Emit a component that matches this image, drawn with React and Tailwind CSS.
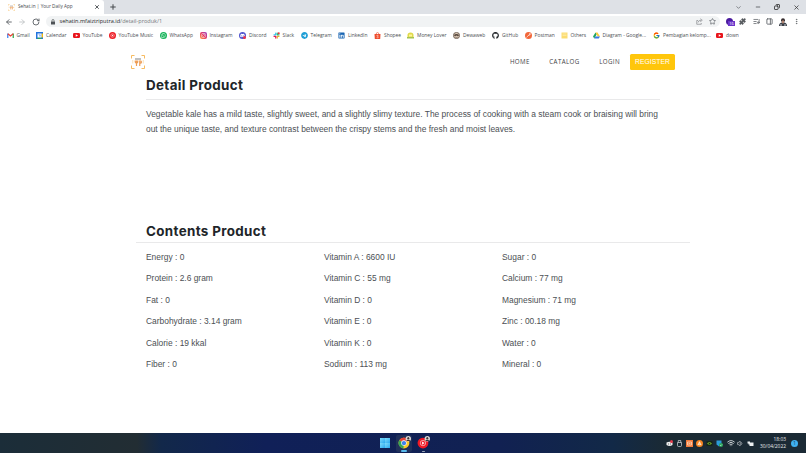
import React from 'react';
import {
  ArrowLeft,
  ArrowRight,
  RotateCw,
  X,
  Plus,
  ChevronDown,
  Minus,
  Copy,
  Star,
  Puzzle,
  ListMusic,
  PanelRight,
  EllipsisVertical,
  Wifi,
  Volume1,
} from 'lucide-react';
import { FaGithub, FaLinkedin, FaDiscord, FaInstagram, FaTelegram, FaWhatsapp } from 'react-icons/fa';
import { FcGoogle } from 'react-icons/fc';

const SehatLogo = ({ className }) => (
  <svg viewBox="0 0 28 28" className={className} fill="none" stroke="#f6b34e" strokeWidth="1.8">
    <path d="M1 7V1h6M21 1h6v6M27 21v6h-6M7 27H1v-6" />
    <path d="M8 8h12" stroke="#8c8c8c" strokeWidth="2.2" />
    <path d="M8.500 11v3q0 2 2.500 2t2.500-2v-3M11 11v11M17.500 11v11M17.500 11.500q3.500 0 3.500 2.500t-3.500 3" stroke="#ee9d55" strokeWidth="2.4" />
    <path d="M3.500 10v7M24.500 10v7" stroke="#f8cf91" strokeWidth="1.3" />
  </svg>
);

const GmailIcon = () => (
  <svg viewBox="0 0 14 14" className="size-[7px]" fill="none" strokeWidth="2.600">
    <path d="M1.500 12V3" stroke="#4285f4" />
    <path d="M12.500 12V3" stroke="#34a853" />
    <path d="M1.500 3.500L7 8l5.500-4.500" stroke="#ea4335" />
  </svg>
);

const CalendarIcon = () => (
  <svg viewBox="0 0 14 14" className="size-[7px]">
    <path d="M0 0h14v14H0z" fill="#2374df" />
    <path d="M11 3h3v8h-3z" fill="#fbbc04" />
    <path d="M3 11h8v3H3z" fill="#34a853" />
    <path d="M3 3h8v8H3z" fill="#fff" />
    <path d="M5 5h2v4M9 5v4" stroke="#4285f4" fill="none" />
  </svg>
);

const YoutubeIcon = () => (
  <svg viewBox="0 0 14 14" className="size-[7px]">
    <rect y="2" width="14" height="10" rx="2.500" fill="#e8141b" />
    <path d="M5.500 4.500v5L10 7z" fill="#fff" />
  </svg>
);

const YoutubeMusicIcon = () => (
  <svg viewBox="0 0 14 14" className="size-[7px]">
    <circle cx="7" cy="7" r="7" fill="#ee1c24" />
    <circle cx="7" cy="7" r="3.600" fill="none" stroke="#fff" strokeWidth=".8" />
    <path d="M5.800 5v4L9 7z" fill="#fff" />
  </svg>
);

const WhatsappIcon = () => (
  <span className="flex size-[7px] items-center justify-center rounded-full bg-[#19b45b]">
    <FaWhatsapp className="size-[5px] text-white" />
  </span>
);

const InstagramIcon = () => (
  <span className="flex size-[7px] items-center justify-center rounded-[2px] bg-linear-to-tr from-[#f9a33a] via-[#e5325e] to-[#9637c8]">
    <FaInstagram className="size-[5px] text-white" />
  </span>
);

const DiscordIcon = () => (
  <span className="relative flex size-[7px] items-center justify-center rounded-full bg-[#5156cf]">
    <FaDiscord className="size-[5px] text-white" />
    <span className="absolute right-0 bottom-0 size-[3px] rounded-full bg-[#e7304b]" />
  </span>
);

const SlackIcon = () => (
  <svg viewBox="0 0 14 14" className="size-[7px]" strokeWidth="2.500" strokeLinecap="round">
    <path d="M5.500 2v3.500M2 5.500h2" stroke="#36c5f0" />
    <path d="M8.500 2v3.500M12 5.500h-2" stroke="#2eb67d" />
    <path d="M8.500 12V8.500M12 8.500h-2" stroke="#ecb22e" />
    <path d="M5.500 12V8.500M2 8.500h2" stroke="#e01e5a" />
    <circle cx="11.500" cy="2.500" r="2" fill="#e5323a" />
  </svg>
);

const ShopeeIcon = () => (
  <svg viewBox="0 0 14 14" className="size-[7px]">
    <path d="M1 4h12l-.6 10H1.600z" fill="#ee4d2d" />
    <path d="M4.500 4q0-3 2.500-3t2.500 3" fill="none" stroke="#ee4d2d" strokeWidth="1.200" />
    <path d="M9 6.800q-4-1.300-3.500.8c.3 1.200 3.500.9 3.300 2.700-.3 1.700-2.300 1.300-3.600.5" fill="none" stroke="#fff" />
  </svg>
);

const MoneyLoverIcon = () => (
  <svg viewBox="0 0 14 14" className="size-[7px]">
    <path d="M1 11V6q0-5 6-5t6 5v5z" fill="#dfd94a" />
    <path d="M0 10h14v3H0z" fill="#a5c34f" />
    <path d="M4 5h6v4H4z" fill="#fff59a" />
  </svg>
);

const DewawebIcon = () => (
  <svg viewBox="0 0 14 14" className="size-[7px]">
    <circle cx="7" cy="7" r="6.200" fill="#d9c7b4" stroke="#58483e" strokeWidth="1.500" />
    <path d="M2 6q5-4 10 0l-1 2H9L7 7 5 8H3z" fill="#54453b" />
    <path d="M4.500 10q2.500 2 5 0" stroke="#54453b" fill="none" />
  </svg>
);

const PostmanIcon = () => (
  <svg viewBox="0 0 14 14" className="size-[7px]">
    <circle cx="7" cy="7" r="7" fill="#f2673a" />
    <path d="M3 11l5.500-6M7 8l2-2" stroke="#fff" strokeWidth="1.300" />
    <circle cx="9.800" cy="4.200" r="1.600" fill="#fff" />
  </svg>
);

const FolderIcon = () => (
  <svg viewBox="0 0 14 14" className="size-[7px]">
    <path d="M1 1h12v12H1z" fill="#fbdc72" />
    <path d="M3 4h8M3 7h8" stroke="#fff0ba" strokeWidth="1.200" />
  </svg>
);

const DriveIcon = () => (
  <svg viewBox="0 0 14 14" className="size-[7px]">
    <path d="M5 1L0 9l2.500 4L7.300 5z" fill="#1fa463" />
    <path d="M5 1h4l5 8H9.600z" fill="#fcc934" />
    <path d="M4.800 9H14l-2.500 4h-9z" fill="#3b78e7" />
  </svg>
);

const bookmarks = [
  { name: 'Gmail', icon: <GmailIcon />, size: 'w-[29.5px]' },
  { name: 'Calendar', icon: <CalendarIcon />, size: 'w-[36.5px]' },
  { name: 'YouTube', icon: <YoutubeIcon />, size: 'w-[36px]' },
  { name: 'YouTube Music', icon: <YoutubeMusicIcon />, size: 'w-[51px]' },
  { name: 'WhatsApp', icon: <WhatsappIcon />, size: 'w-[40px]' },
  { name: 'Instagram', icon: <InstagramIcon />, size: 'w-[39.5px]' },
  { name: 'Discord', icon: <DiscordIcon />, size: 'w-[33.5px]' },
  { name: 'Slack', icon: <SlackIcon />, size: 'w-[28px]' },
  { name: 'Telegram', icon: <FaTelegram className="size-[7px] text-[#219fd6]" />, size: 'w-[37.5px]' },
  { name: 'LinkedIn', icon: <FaLinkedin className="size-[7px] text-[#1764b2]" />, size: 'w-[36px]' },
  { name: 'Shopee', icon: <ShopeeIcon />, size: 'w-[33px]' },
  { name: 'Money Lover', icon: <MoneyLoverIcon />, size: 'w-[46px]' },
  { name: 'Dewaweb', icon: <DewawebIcon />, size: 'w-[39px]' },
  { name: 'GitHub', icon: <FaGithub className="size-[7px] text-[#1b1f23]" />, size: 'w-[32.5px]' },
  { name: 'Postman', icon: <PostmanIcon />, size: 'w-[36px]' },
  { name: 'Others', icon: <FolderIcon />, size: 'w-[32px]' },
  { name: 'Diagram - Google...', icon: <DriveIcon />, size: 'w-[60.5px]' },
  { name: 'Pembagian kelomp...', icon: <FcGoogle className="size-[7px]" />, size: 'w-[63px]' },
  { name: 'down', icon: <YoutubeIcon />, size: 'w-[30px]' },
];

const contents = [
  ['Energy : 0', 'Vitamin A : 6600 IU', 'Sugar : 0'],
  ['Protein : 2.6 gram', 'Vitamin C : 55 mg', 'Calcium : 77 mg'],
  ['Fat : 0', 'Vitamin D : 0', 'Magnesium : 71 mg'],
  ['Carbohydrate : 3.14 gram', 'Vitamin E : 0', 'Zinc : 00.18 mg'],
  ['Calorie : 19 kkal', 'Vitamin K : 0', 'Water : 0'],
  ['Fiber : 0', 'Sodium : 113 mg', 'Mineral : 0'],
];

const TabStrip = () => (
  <div className="flex h-[14px] items-center bg-[#dee1e6] text-[#45494d]">
    <div className="flex h-full w-[104px] items-center rounded-tr-[3px] bg-white pl-[8px]">
      <SehatLogo className="size-[7px]" />
      <span className="ml-[3px] text-[4.7px]">Sehat.in | Your Daily App</span>
      <X className="mr-[4px] ml-auto size-[6px]" strokeWidth={3.5} />
    </div>
    <Plus className="ml-[5px] size-[8px]" strokeWidth={3} />
    <div className="ml-auto flex items-center">
      <ChevronDown className="mr-[13px] size-[7px]" strokeWidth={2} />
      <Minus className="mr-[13px] size-[6px]" strokeWidth={3} />
      <Copy className="mr-[13px] size-[6px] -scale-x-100 text-[#222]" strokeWidth={3} />
      <X className="mr-[6px] size-[7px] text-[#333]" strokeWidth={2.5} />
    </div>
  </div>
);

const AddressBar = () => (
  <div className="flex h-[15px] items-center text-[#5f6368]">
    <ArrowLeft className="ml-[5px] size-[8px]" strokeWidth={2.8} />
    <ArrowRight className="ml-[5px] size-[8px] text-[#bcbfc2]" strokeWidth={2.5} />
    <RotateCw className="ml-[6px] size-[8px]" strokeWidth={2.8} />
    <div className="ml-[6px] flex h-[11px] w-[674px] items-center rounded-full bg-[#f1f3f4] pl-[4px]">
      <svg viewBox="0 0 12 12" className="size-[6px]">
        <path d="M2 5h8v6H2z" fill="#4d5155" />
        <path d="M4 5V3q0-2 2-2t2 2v2" fill="none" stroke="#4d5155" strokeWidth="1.400" />
      </svg>
      <span className="ml-[3.5px] text-[5.55px] leading-none text-[#24272a]">
        sehatin.mfaiztriputra.id<span className="text-[#75797d]">/detail-produk/1</span>
      </span>
      <svg viewBox="0 0 14 14" className="mr-[6px] ml-auto size-[7px]" fill="none" stroke="#7b7f83" strokeWidth="1.300">
        <path d="M4 5H1.500v7.500h9V10M4 9q.5-4.500 6-4.500M8.500 1.500l4 3-4 3" />
      </svg>
      <Star className="mr-[4px] size-[7px]" strokeWidth={2.4} />
    </div>
    <div className="relative ml-[6px] size-[7px] rounded-full bg-[#4a1a9e]">
      <span className="absolute top-[3px] left-[2px] flex h-[5px] w-[7px] items-center justify-center bg-[#6b34c9] text-[4px] text-white">
        16
      </span>
    </div>
    <Puzzle className="ml-[6px] size-[7px] fill-[#55595d]" />
    <ListMusic className="ml-[7px] size-[7px]" strokeWidth={2.6} />
    <PanelRight className="ml-[6px] size-[7px]" strokeWidth={3} />
    <svg viewBox="0 0 16 16" className="ml-[6px] size-[8px]">
      <circle cx="8" cy="4.500" r="4" fill="#342b2c" />
      <path d="M0 16q0-6 5-7h6q5 1 5 7z" fill="#373c45" />
      <path d="M6 5h4v4L8 12 6 9z" fill="#b28572" />
      <path d="M3 12h2v4H3zM11 12h2v4h-2z" fill="#d2d4da" />
    </svg>
    <EllipsisVertical className="ml-[6px] size-[7px]" strokeWidth={2.5} />
  </div>
);

const Bookmarks = () => (
  <div className="flex h-[13px] items-center pl-[6.5px] text-[4.900px] leading-none text-[#4b4e52]">
    {bookmarks.map((b) => (
      <div key={b.name} className={`flex shrink-0 items-center gap-[3px] whitespace-nowrap ${b.size}`}>
        <span className="shrink-0">{b.icon}</span>
        {b.name}
      </div>
    ))}
  </div>
);

const Navbar = () => (
  <nav className="flex h-[34px] items-center pr-[131px] pl-[131px] pt-[5px] font-['Open_Sans',sans-serif] text-[6.2px] font-medium tracking-[0.38px] text-[#3f4246]">
    <SehatLogo className="size-[14px]" />
    <a className="ml-auto">HOME</a>
    <a className="ml-[19.5px]">CATALOG</a>
    <a className="ml-[19.5px]">LOGIN</a>
    <button className="ml-[10px] h-[16px] w-[45px] rounded-[1.5px] bg-[#ffc60b] pt-[1px] font-['Liberation_Sans',sans-serif] text-[6.8px] tracking-[0.05px] text-white">
      REGISTER
    </button>
  </nav>
);

const Product = () => (
  <main className="h-[357px] font-['Liberation_Sans',sans-serif] text-[8.42px] text-[#4c5054]">
    <section className="ml-[146px] h-[146px] w-[514px]">
      <h1 className="h-[24px] border-b border-[#e9e9ea] font-['Inter',sans-serif] text-[13.4px] leading-[18px] font-bold tracking-[0.35px] text-[#212529]">
        Detail Product
      </h1>
      <p className="pt-[7px] leading-[14.5px] whitespace-nowrap">
        Vegetable kale has a mild taste, slightly sweet, and a slightly slimy texture. The process of cooking with a steam cook or braising will bring<br />
        out the unique taste, and texture contrast between the crispy stems and the fresh and moist leaves.
      </p>
    </section>
    <section className="ml-[136px] w-[554px]">
      <h1 className="h-[21px] border-b border-[#e9e9ea] pl-[10px] font-['Inter',sans-serif] text-[13.4px] leading-[19px] font-bold tracking-[0.35px] text-[#212529]">
        Contents Product
      </h1>
      <div className="grid grid-cols-[178px_178px_178px] pt-[4px] pl-[10px]">
        {contents.flat().map((item) => (
          <p key={item} className="h-[21.4px] leading-[21px]">{item}</p>
        ))}
      </div>
    </section>
  </main>
);

const ProfileBadge = () => (
  <g>
    <circle cx="19" cy="5" r="5" fill="#ddd8d6" />
    <path d="M17 4q2-4 4 0v2h-4zM15 9q4-4 8 0z" fill="#3a3435" />
  </g>
);

const ChromeIcon = () => (
  <svg viewBox="0 0 24 24" className="size-[13px]">
    <circle cx="11" cy="13" r="10" fill="#f9c928" />
    <path d="M11 13L2.300 8a10 10 0 0 1 17.400 0z" fill="#e6453a" />
    <path d="M11 13L2.300 8a10 10 0 0 0 7.700 15z" fill="#35a455" />
    <circle cx="11" cy="13" r="5" fill="#fff" />
    <circle cx="11" cy="13" r="4" fill="#3f82ec" />
    <ProfileBadge />
  </svg>
);

const MusicIcon = () => (
  <svg viewBox="0 0 24 24" className="size-[13px]">
    <circle cx="11" cy="13" r="10" fill="#f01824" />
    <circle cx="11" cy="13" r="5" fill="none" stroke="#fff" />
    <path d="M9.500 10v6l4.500-3z" fill="#fff" />
    <ProfileBadge />
  </svg>
);

const Taskbar = () => (
  <footer className="flex h-[20px] items-center bg-[linear-gradient(90deg,#1b2d39_0%,#222d33_17%,#12284a_20%,#102058_33%,#112152_62%,#122947_76%,#1b2a33_83%,#1b2a35_100%)] pl-[380px] text-[#e5e9ec]">
    <div className="grid size-[10px] grid-cols-2 gap-[0.5px]">
      {[0, 1, 2, 3].map((n) => (
        <span key={n} className="bg-linear-to-br from-[#7bdcfb] to-[#26a9ee]" />
      ))}
    </div>
    <div className="ml-[6px] flex h-[17px] w-[16px] flex-col items-center justify-between rounded-[2px] bg-[#20305a] pt-[1px]">
      <ChromeIcon />
      <span className="h-[1.5px] w-[6px] rounded-full bg-[#58bbed]" />
    </div>
    <div className="ml-[3px] flex h-[17px] w-[16px] flex-col items-center justify-between pt-[1px]">
      <MusicIcon />
      <span className="h-[1px] w-[3px] rounded-full bg-[#9aa5b8]" />
    </div>
    <div className="ml-auto flex items-center">
      <svg viewBox="0 0 14 14" className="size-[7px]">
        <path d="M1 5q6-3 12 0v5q-6 4-12 0z" fill="#eee" />
        <circle cx="11" cy="3" r="3" fill="#e33b4c" />
        <path d="M4 8h2M8 8h2" stroke="#444" strokeWidth="1.500" />
      </svg>
      <svg viewBox="0 0 14 14" className="ml-[3px] size-[7px]" fill="none" stroke="currentColor" strokeWidth="1.300">
        <path d="M4.500 5V1h5v4M3 5h8v6q0 2-2 2H5q-2 0-2-2z" />
      </svg>
      <svg viewBox="0 0 14 14" className="ml-[3px] size-[7px]">
        <path d="M0 0h14v14H0z" fill="#f27b3b" />
        <path d="M3 4h8v6H3zM5 7h4" fill="none" stroke="#ffe2ca" strokeWidth="1.400" />
      </svg>
      <svg viewBox="0 0 14 14" className="ml-[3px] size-[7px]">
        <circle cx="7" cy="7" r="7" fill="#f58220" />
        <path d="M7 2l4 8H3zM7 6v6" fill="#fff" stroke="#f9ad5e" />
      </svg>
      <svg viewBox="0 0 14 14" className="ml-[3px] size-[7px]">
        <path d="M1 2h12v10H1z" fill="#152417" />
        <path d="M2 7q5-6 10 0-5 5-10 0z" fill="#70a52b" />
        <circle cx="7" cy="7" r="1.500" fill="#152417" />
      </svg>
      <svg viewBox="0 0 14 14" className="ml-[3px] size-[7px]">
        <path d="M1 1h10v8l-5 4-5-4z" fill="#2c9bd9" />
        <circle cx="10" cy="10" r="4" fill="#29a65c" />
        <path d="M8 10l1.500 1.500L12 9" fill="none" stroke="#fff" />
      </svg>
      <Wifi className="ml-[4px] size-[8px]" strokeWidth={2.5} />
      <Volume1 className="ml-[2px] size-[7px]" strokeWidth={2} />
      <svg viewBox="0 0 14 14" className="ml-[3px] size-[7px]" fill="#eceff1">
        <path d="M4 5h9v7H5V9H3V7H1V3h5v2z" />
      </svg>
    </div>
    <div className="mr-[5px] ml-[6.5px] w-[26px] text-right text-[4.900px] leading-[7px]">
      <p>18:03</p>
      <p>30/04/2022</p>
    </div>
    <span className="mr-[8px] flex size-[7px] items-center justify-center rounded-full bg-[#3fb0f0] text-[4.500px] text-[#173247]">1</span>
  </footer>
);

const App = () => (
  <div className="h-[453px] w-[806px] overflow-hidden bg-white font-['Open_Sans',sans-serif]">
    <TabStrip />
    <AddressBar />
    <Bookmarks />
    <Navbar />
    <Product />
    <Taskbar />
  </div>
);

export default App;
